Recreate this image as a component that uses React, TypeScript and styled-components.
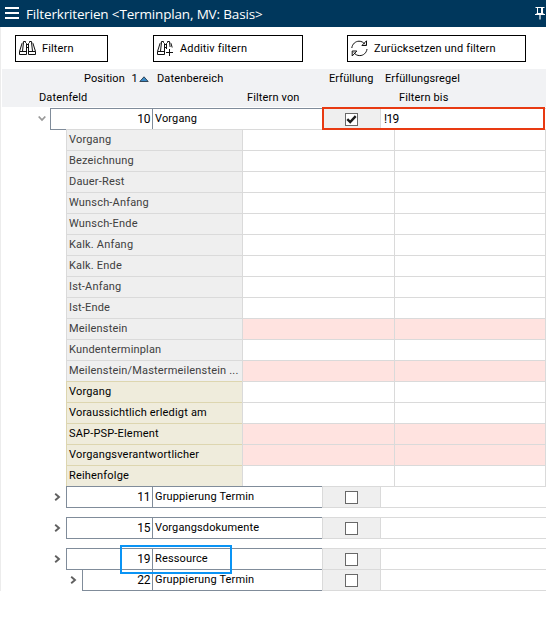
import React from 'react';
import styled, { createGlobalStyle, css } from 'styled-components';

const GlobalStyle = createGlobalStyle`
  * { box-sizing: border-box; }
  body { margin: 0; background: #fff; overflow: hidden; }
`;

const slate = '#808c9a';
const line = '#dadada';

const Window = styled.div`
  width: 546px;
  height: 633px;
  overflow: hidden;
  background: #fff;
  color: #000;
  font: 11px/14px Roboto, sans-serif;
  letter-spacing: 0.14px;
  white-space: nowrap;
`;

const TitleBar = styled.header`
  display: flex;
  align-items: center;
  height: 27px;
  padding-left: 5px;
  background: #00375c;
  color: #fff;
`;

const Title = styled.h1`
  flex: 1;
  margin: 0 0 0 7px;
  font: 400 13.5px/20px 'Open Sans', 'Noto Sans', sans-serif;
  letter-spacing: -0.16px;
`;

const Panel = styled.main`
  height: 564px;
  border-left: 1px solid #ececec;
  padding-left: 1px;
`;

const Toolbar = styled.div`
  display: flex;
  height: 42px;
  padding: 8px 0 0 13px;
`;

const ToolButton = styled.button<{ $width: number; $gap: number }>`
  display: flex;
  align-items: center;
  flex: none;
  width: ${p => p.$width}px;
  height: 27px;
  margin-right: ${p => p.$gap}px;
  padding: 0 0 0 3px;
  border: 1px solid #000;
  background: #fff;
  color: #000;
  font: inherit;
  letter-spacing: inherit;
  svg { flex: none; margin-right: 6px; }
`;

const ColumnHeads = styled.div`
  height: 38px;
  background: #f1f2f4;
`;

const HeadLine = styled.div<{ $columns: string }>`
  display: grid;
  grid-template-columns: ${p => p.$columns};
  height: 19px;
  line-height: 18px;
`;

const HeadCell = styled.span<{ $tight?: boolean }>`
  display: flex;
  align-items: center;
  ${p => p.$tight && css`letter-spacing: 0.1px;`}
`;

const SortMark = styled.span`
  display: flex;
  align-items: center;
  gap: 1px;
  margin-left: 6.5px;
`;

const Tree = styled.div`
  margin-left: -2px;
  padding-top: 1px;
`;

const GroupRow = styled.div<{ $gap?: number }>`
  position: relative;
  display: flex;
  height: 22px;
  margin-top: ${p => (p.$gap ?? 0) - 1}px;
`;

const Indent = styled.div<{ $width: number }>`
  display: flex;
  flex: none;
  justify-content: flex-end;
  align-items: center;
  width: ${p => p.$width}px;
  padding-right: 4px;
`;

const NumberCell = styled.div`
  flex: 1;
  border: 1px solid ${slate};
  border-right: 0;
  padding: 3px 2px 0 0;
  text-align: right;
  letter-spacing: -0.4px;
  font-size: 12px;
`;

const AreaCell = styled.div`
  flex: none;
  width: 170px;
  border: 1px solid ${slate};
  border-right: 0;
  padding: 3px 0 0 2px;
`;

const CheckCell = styled.div`
  flex: none;
  width: 59px;
  border: 1px solid ${line};
  background: #efefef;
  padding: 4px 0 0 22px;
`;

const CheckBox = styled.span`
  display: block;
  width: 13px;
  height: 13px;
  border: 1px solid #686868;
  background: #fff;
  svg { display: block; }
`;

const RuleCell = styled.div`
  flex: none;
  width: 165px;
  border: solid ${line};
  border-width: 1px 0;
  padding: 3px 0 0 3px;
  font-size: 12px;
  letter-spacing: -0.7px;
`;

const Fields = styled.div`
  position: relative;
  margin: -1px 0 0 66px;
`;

const FieldRow = styled.div`
  display: grid;
  grid-template-columns: 176px 152px 152px;
  height: 21px;
`;

const FieldLabel = styled.div<{ $custom: boolean }>`
  border: solid ${p => (p.$custom ? '#ddd6b0' : line)};
  border-width: 1px 0 0 1px;
  background: ${p => (p.$custom ? '#efecdc' : '#efefef')};
  color: ${p => (p.$custom ? '#000' : '#404040')};
  padding: 3px 0 0 2px;
  letter-spacing: 0.18px;
`;

const FieldValue = styled.div<{ $locked: boolean }>`
  border: solid ${line};
  border-width: 1px 0 0 1px;
  background: ${p => (p.$locked ? '#ffe3e0' : '#fff')};
  &:last-child { border-right-width: 1px; }
`;

const Marker = styled.div<{ $color: string }>`
  position: absolute;
  border: 2px solid ${p => p.$color};
  pointer-events: none;
`;

const RuleMarker = styled(Marker)`
  top: -1px;
  left: 322px;
  width: 223px;
  height: 23px;
  z-index: 2;
`;

const ResourceMarker = styled(Marker)`
  top: -3px;
  left: 120px;
  width: 112px;
  height: 29px;
  z-index: 2;
`;

const MenuIcon = () => (
  <svg width="14" height="27" viewBox="0 0 14 27" fill="#fff" shapeRendering="crispEdges">
    <path d="M0 7h14v2H0zM0 12h14v2H0zM0 17h14v2H0z" />
  </svg>
);

const PinIcon = () => (
  <svg width="11" height="27" viewBox="0 0 11 27" fill="none" stroke="#fff">
    <path d="M.5 7.5h9M2.5 8v5M7.5 8v5M6.5 8v5M0 14.5h10" />
    <path d="M1.5 13.5h7M5 15v4.5" strokeWidth="1.2" />
  </svg>
);

const Binoculars = ({ plus = false }: { plus?: boolean }) => (
  <svg width="17" height="17" viewBox="0 0 17 17" fill="none" stroke="#111" strokeWidth="1">
    <path d="M.5 11.5 3 3.5l1-1h.5v-1h2v1l1 1v11h-7zM.5 11.5h7M4.5 2.5 3.5 11M7.5 4.5h2M7.5 7.5h2" />
    {plus ? (
      <path d="M9.5 9V3.5l1-1v-1h2v1h.5l1 1 1.2 4M12.5 2.5l.6 4.5M12.5 9v7M9 12.5h7" />
    ) : (
      <path d="M16.5 11.5 14 3.5l-1-1h-.5v-1h-2v1l-1 1v11h7zM9.5 11.5h7M12.5 2.5l1 8.5" />
    )}
  </svg>
);

const RefreshIcon = () => (
  <svg width="17" height="17" viewBox="0 0 17 17" fill="none" stroke="#111">
    <path d="M.8 8C1.3 4 4.5 1.2 8 1.2c2.5 0 4.5 1.2 6 3.2M15.5.8v4.7h-4.6zM16 9c-.5 4-3.7 6.6-7.2 6.6-2.6 0-4.6-1.1-6-3.2M1.2 16v-5h4.6z" />
  </svg>
);

const Chevron = ({ open = false }: { open?: boolean }) =>
  open ? (
    <svg width="8" height="8" viewBox="0 0 8 8" fill="none" stroke="#999" strokeWidth="1.8">
      <path d="M.7 1.5 4 5 7.3 1.5" />
    </svg>
  ) : (
    <svg width="8" height="8" viewBox="0 0 8 8" fill="none" stroke="#606060" strokeWidth="1.9">
      <path d="M1.2.7 5 4 1.2 7.3" />
    </svg>
  );

interface GroupProps {
  indent: number;
  num: number;
  name: string;
  gap?: number;
  open?: boolean;
  rule?: string;
  children?: React.ReactNode;
}

const Group = ({ indent, num, name, gap, open, rule, children }: GroupProps) => (
  <GroupRow $gap={gap}>
    <Indent $width={indent}><Chevron open={open} /></Indent>
    <NumberCell>{num}</NumberCell>
    <AreaCell>{name}</AreaCell>
    <CheckCell>
      <CheckBox>
        {open && (
          <svg width="11" height="11" viewBox="0 0 11 11" fill="none" stroke="#1c1c1c" strokeWidth="2.4">
            <path d="M1.3 5.2 4.2 8 9.7 2.2" />
          </svg>
        )}
      </CheckBox>
    </CheckCell>
    <RuleCell>{rule}</RuleCell>
    {children}
  </GroupRow>
);

const fields: { label: string; custom?: boolean; locked?: boolean }[] = [
  { label: 'Vorgang' },
  { label: 'Bezeichnung' },
  { label: 'Dauer-Rest' },
  { label: 'Wunsch-Anfang' },
  { label: 'Wunsch-Ende' },
  { label: 'Kalk. Anfang' },
  { label: 'Kalk. Ende' },
  { label: 'Ist-Anfang' },
  { label: 'Ist-Ende' },
  { label: 'Meilenstein', locked: true },
  { label: 'Kundenterminplan' },
  { label: 'Meilenstein/Mastermeilenstein ...', locked: true },
  { label: 'Vorgang', custom: true },
  { label: 'Voraussichtlich erledigt am', custom: true },
  { label: 'SAP-PSP-Element', custom: true, locked: true },
  { label: 'Vorgangsverantwortlicher', custom: true, locked: true },
  { label: 'Reihenfolge', custom: true },
];

export default function App() {
  return (
    <Window>
      <GlobalStyle />
      <TitleBar>
        <MenuIcon />
        <Title>Filterkriterien &lt;Terminplan, MV: Basis&gt;</Title>
        <PinIcon />
      </TitleBar>
      <Panel>
        <Toolbar>
          <ToolButton $width={93} $gap={45}><Binoculars />Filtern</ToolButton>
          <ToolButton $width={150} $gap={44}><Binoculars plus />Additiv filtern</ToolButton>
          <ToolButton $width={179} $gap={0}><RefreshIcon />Zurücksetzen und filtern</ToolButton>
        </Toolbar>
        <ColumnHeads>
          <HeadLine $columns="82px 73px 172px 56px 1fr">
            <span />
            <HeadCell $tight>
              Position
              <SortMark>
                1
                <svg width="10" height="6" viewBox="0 0 10 6">
                  <path d="M.8 5.5 5 .8l4.2 4.7z" fill="#3a8bc8" stroke="#28394a" strokeWidth=".9" />
                </svg>
              </SortMark>
            </HeadCell>
            <HeadCell>Datenbereich</HeadCell>
            <HeadCell $tight>Erfüllung</HeadCell>
            <HeadCell $tight>Erfüllungsregel</HeadCell>
          </HeadLine>
          <HeadLine $columns="37px 208px 152px 1fr">
            <span />
            <HeadCell>Datenfeld</HeadCell>
            <HeadCell>Filtern von</HeadCell>
            <HeadCell>Filtern bis</HeadCell>
          </HeadLine>
        </ColumnHeads>
        <Tree>
          <Group indent={50} num={10} name="Vorgang" gap={1} open rule="!19">
            <RuleMarker $color="#e83a12" />
          </Group>
          <Fields>
            {fields.map((f, i) => (
              <FieldRow key={i}>
                <FieldLabel $custom={!!f.custom}>{f.label}</FieldLabel>
                <FieldValue $locked={!!f.locked} />
                <FieldValue $locked={!!f.locked} />
              </FieldRow>
            ))}
          </Fields>
          <Group indent={66} num={11} name="Gruppierung Termin" gap={1} />
          <Group indent={66} num={15} name="Vorgangsdokumente" gap={10} />
          <Group indent={66} num={19} name="Ressource" gap={10}>
            <ResourceMarker $color="#0a94f5" />
          </Group>
          <Group indent={82} num={22} name="Gruppierung Termin" />
        </Tree>
      </Panel>
    </Window>
  );
}
